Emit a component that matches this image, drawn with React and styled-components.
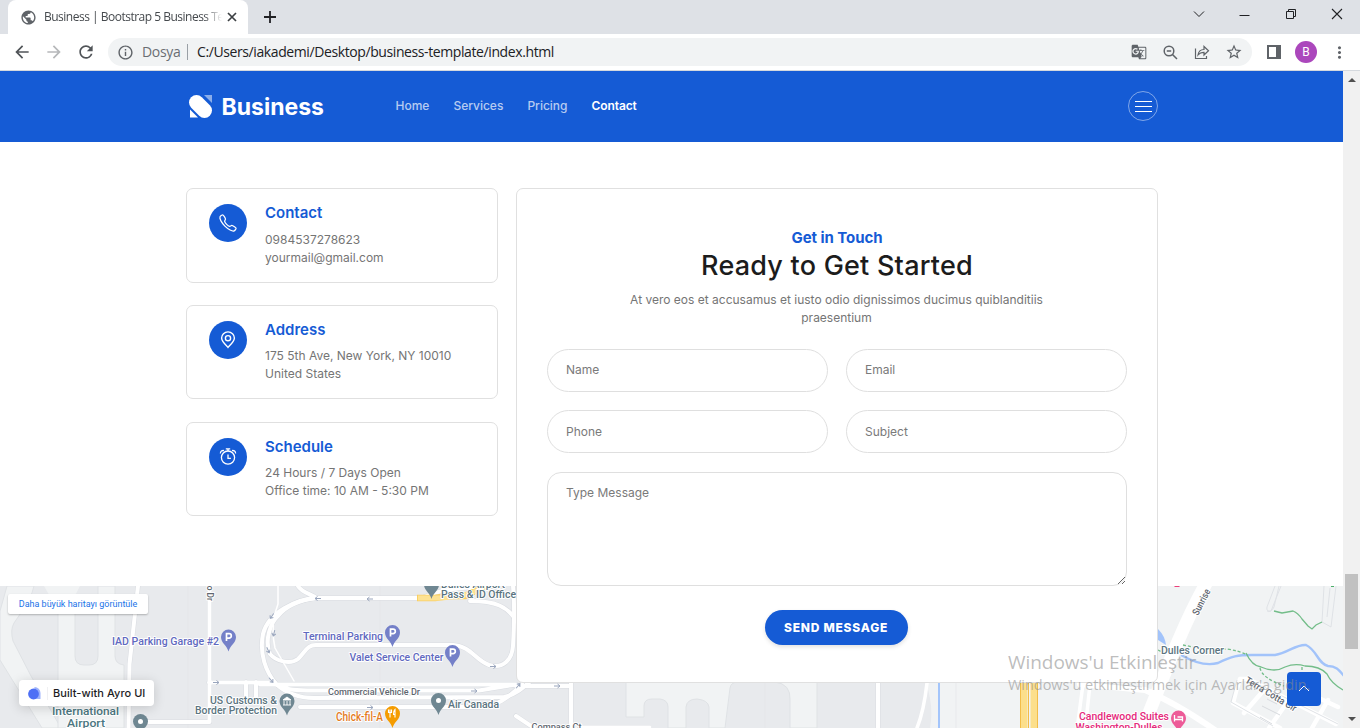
import React from 'react';
import styled, { createGlobalStyle, css } from 'styled-components';
import {
  MdArrowBack, MdArrowForward, MdRefresh, MdInfoOutline, MdGTranslate,
  MdStarBorder, MdMoreVert, MdPublic,
} from 'react-icons/md';
import { IoCallOutline } from 'react-icons/io5';

const BLUE = '#155bd5';
const inter = "Inter, 'Liberation Sans', sans-serif";
const segoe = "'Open Sans', 'Noto Sans', sans-serif";

const Global = createGlobalStyle`
  * { box-sizing: border-box; }
  body { margin: 0; background: #fff; overflow: hidden; font-family: ${inter}; }
`;

const Window = styled.div`
  position: relative;
  width: 1360px;
  height: 728px;
  display: flex;
  flex-direction: column;
  overflow: hidden;
`;

/* ---------- browser chrome ---------- */
const TabBar = styled.div`
  height: 34px;
  flex: none;
  background: #dee1e6;
  display: flex;
  align-items: flex-start;
`;
const Tab = styled.div`
  width: 240px;
  height: 34px;
  margin-left: 8px;
  padding: 0 10px 0 12px;
  background: #fff;
  border-radius: 8px 8px 0 0;
  display: flex;
  align-items: center;
  color: #5f6368;
`;
const TabTitle = styled.span`
  flex: 1;
  margin-left: 7px;
  font: 12px/16px ${segoe};
  letter-spacing: -0.5px;
  color: #45494d;
  white-space: nowrap;
  overflow: hidden;
  mask-image: linear-gradient(90deg, #000 160px, transparent 178px);
`;
const Glyph = styled.svg`
  display: block;
  flex: none;
  fill: none;
  stroke: ${(p) => p.$color || '#202124'};
  stroke-width: ${(p) => p.$weight || 1};
`;
const NewTab = styled.div`
  padding: 11px 0 0 16px;
`;
const WindowButtons = styled.div`
  margin-left: auto;
  height: 28px;
  display: flex;
  align-items: center;
  gap: 31px;
  padding-right: 15px;
`;
const Toolbar = styled.div`
  height: 37px;
  flex: none;
  display: flex;
  align-items: center;
  padding: 0 11px 0 12px;
  background: #fff;
  border-bottom: 1px solid #d5d9de;
  color: #5f6368;
`;
const NavIcons = styled.div`
  display: flex;
  gap: 12px;
  svg { width: 20px; height: 20px; color: #505458; }
  svg:nth-child(2) { color: #b6b8ba; }
`;
const Omnibox = styled.div`
  flex: 1;
  height: 28px;
  margin-left: 12px;
  padding: 0 9px 0 9px;
  border-radius: 14px;
  background: #f1f3f4;
  display: flex;
  align-items: center;
  font: 14px/20px ${segoe};
  color: #202124;
`;
const Scheme = styled.span`
  width: 45px;
  margin-left: 8px;
  letter-spacing: -0.3px;
  color: #6a6e73;
`;
const Divider = styled.i`
  width: 1px;
  height: 16px;
  margin: 0 9px 0 0;
  background: #9aa0a6;
`;
const Url = styled.span`
  flex: 1;
  white-space: nowrap;
  letter-spacing: -0.4px;
`;
const OmniIcons = styled.div`
  display: flex;
  align-items: center;
  gap: 15px;
  color: #5f6368;
`;
const SideIcons = styled.div`
  display: flex;
  align-items: center;
  padding-left: 15px;
`;
const Avatar = styled.span`
  width: 22px;
  height: 22px;
  margin: 0 13px 0 14px;
  border-radius: 50%;
  background: #ab47bc;
  color: #fff;
  font: 12px/22px Roboto, sans-serif;
  text-align: center;
`;

/* ---------- page ---------- */
const Viewport = styled.div`
  flex: 1;
  min-height: 0;
  display: flex;
`;
const Page = styled.main`
  position: relative;
  width: 1343px;
  display: flex;
  flex-direction: column;
  overflow: hidden;
`;
const Scrollbar = styled.div`
  width: 17px;
  background: #f1f1f1;
  display: flex;
  flex-direction: column;
  align-items: center;
  padding: 7px 0;
`;
const Arrow = styled.i`
  border: 4px solid transparent;
  border-top-width: ${(p) => (p.$down ? '4px' : 0)};
  border-bottom-width: ${(p) => (p.$down ? 0 : '4px')};
  border-${(p) => (p.$down ? 'top' : 'bottom')}-color: #505050;
`;
const Thumb = styled.div`
  width: 13px;
  height: 75px;
  margin: 492px 0 auto;
  background: #c1c1c1;
`;

const Header = styled.header`
  height: 71px;
  flex: none;
  padding: 0 185px 0 188px;
  background: ${BLUE};
  display: flex;
  align-items: center;
`;
const Brand = styled.div`
  width: 207.5px;
  display: flex;
  align-items: center;
  gap: 8.5px;
  color: #fff;
  font-size: 23px;
  font-weight: 700;
  line-height: 28px;
`;
const Nav = styled.nav`
  display: flex;
  gap: 24px;
  margin-top: -1px;
`;
const NavLink = styled.span`
  font-size: 12px;
  font-weight: 500;
  line-height: 18px;
  color: ${(p) => (p.$active ? '#fff' : 'rgba(255,255,255,.7)')};
  ${(p) => p.$active && css`font-weight: 600; letter-spacing: -0.1px;`}
`;
const MenuToggle = styled.div`
  width: 30px;
  height: 30px;
  margin: 0 0 1px auto;
  border: 1px solid rgba(255, 255, 255, 0.45);
  border-radius: 50%;
  display: flex;
  flex-direction: column;
  align-items: center;
  justify-content: center;
  gap: 4px;
`;
const MenuBar = styled.i`
  width: 17px;
  height: 1px;
  background: #fff;
`;

const ContactSection = styled.section`
  height: 444px;
  flex: none;
  padding: 46px 0 0 186px;
  display: flex;
  align-items: flex-start;
  gap: 18px;
`;
const InfoColumn = styled.div`
  width: 312px;
  display: flex;
  flex-direction: column;
  gap: 23px;
`;
const InfoTitle = styled.h3`
  margin: 0 0 8px;
  font-size: 15px;
  font-weight: 600;
  line-height: 18px;
  color: ${BLUE};
`;
const InfoCard = styled.article`
  height: 94px;
  padding: 15px 22px;
  border: 1px solid #e0e0e0;
  border-radius: 7px;
  display: flex;
  gap: 18px;
  &:first-child { height: 95px; margin-bottom: -1px; }
  &:first-child ${InfoTitle} { margin-bottom: 9px; }
`;
const InfoIcon = styled.div`
  width: 38px;
  height: 38px;
  border-radius: 50%;
  background: ${BLUE};
  color: #fff;
  display: flex;
  align-items: center;
  justify-content: center;
`;
const InfoLine = styled.p`
  margin: 0;
  font-size: 12px;
  line-height: 18px;
  color: #757575;
  white-space: nowrap;
`;

const FormCard = styled.form`
  position: relative;
  z-index: 1;
  width: 642px;
  height: 495px;
  padding: 38px 30px 0;
  background: #fff;
  border: 1px solid #e0e0e0;
  border-radius: 7px;
  display: flex;
  flex-direction: column;
  align-items: center;
  text-align: center;
`;
const Eyebrow = styled.h5`
  margin: 0;
  font-size: 15px;
  font-weight: 700;
  line-height: 22px;
  letter-spacing: -0.05px;
  color: ${BLUE};
`;
const Heading = styled.h2`
  margin: 0;
  font-size: 27px;
  font-weight: 500;
  line-height: 34px;
  letter-spacing: 0.22px;
  color: #1c1c1c;
`;
const Lead = styled.p`
  width: 440px;
  margin: 8px 0 22px;
  padding-right: 1px;
  font-size: 12px;
  line-height: 18px;
  color: #757575;
`;
const Fields = styled.div`
  width: 580px;
  display: grid;
  grid-template-columns: 1fr 1fr;
  column-gap: 18px;
  row-gap: 18px;
`;
const fieldStyle = css`
  display: block;
  border: 1px solid #dfdfdf;
  background: #fff;
  font: 12px/18px ${inter};
  outline: none;
  &::placeholder { color: #7a7a7a; opacity: 1; }
`;
const Input = styled.input`
  ${fieldStyle}
  width: 100%;
  height: 43px;
  padding: 0 18px ${(p) => (p.$raised ? '3px' : '1px')};
  border-radius: 22px;
`;
const Message = styled.textarea`
  ${fieldStyle}
  grid-column: 1 / -1;
  width: 100%;
  height: 114px;
  margin-top: 1px;
  padding: 11px 18px;
  border-radius: 14px;
  resize: vertical;
`;
const Submit = styled.button`
  width: 143px;
  height: 35px;
  flex: none;
  margin: 24px 2px 0 0;
  padding: 0;
  border: 0;
  border-radius: 18px;
  background: ${BLUE};
  box-shadow: 0 2px 4px rgba(0, 0, 0, 0.12);
  color: #fff;
  font: 800 12px/18px ${inter};
  letter-spacing: 0.75px;
`;

const MapArea = styled.section`
  position: relative;
  height: 142px;
  flex: none;
`;
const MapSvg = styled.svg`
  display: block;
  text { font-family: Roboto, sans-serif; paint-order: stroke; stroke: #fff; stroke-width: 2px; stroke-linejoin: round; }
`;
const MapLink = styled.div`
  position: absolute;
  left: 8px;
  top: 8px;
  width: 140px;
  height: 20px;
  background: #fff;
  border-radius: 2px;
  box-shadow: 0 1px 2px rgba(0, 0, 0, 0.25);
  color: #1a73e8;
  font: 9px/20px Roboto, sans-serif;
  text-align: center;
`;
const AyroBadge = styled.div`
  position: absolute;
  left: 19px;
  top: 94px;
  width: 135px;
  height: 26px;
  padding-left: 9px;
  background: #fff;
  border-radius: 4px;
  box-shadow: 0 2px 12px rgba(0, 0, 0, 0.16);
  display: flex;
  align-items: center;
  color: #1d1d1f;
  font-size: 11px;
  font-weight: 500;
  letter-spacing: 0.05px;
  white-space: nowrap;
`;
const AyroRule = styled.i`
  width: 1px;
  height: 13px;
  margin: 0 5px 0 6px;
  background: #f0f0f2;
`;
const ScrollTop = styled.div`
  position: absolute;
  left: 1287px;
  top: 86px;
  width: 34px;
  height: 34px;
  border-radius: 4px;
  background: ${BLUE};
  display: flex;
  align-items: center;
  justify-content: center;
`;
const Watermark = styled.div`
  position: absolute;
  z-index: 3;
  left: 1008px;
  top: 650px;
  color: rgba(140, 140, 140, 0.58);
  font-family: ${segoe};
  white-space: nowrap;
`;
const WatermarkTitle = styled.div`
  font-size: 19px;
  line-height: 24px;
  letter-spacing: -0.05px;
`;
const WatermarkText = styled.div`
  font-size: 14.5px;
  line-height: 22px;
  letter-spacing: -0.04px;
`;

const AlarmIcon = () => (
  <Glyph width="18" height="18" viewBox="0 0 18 18" $color="#fff" $weight="1.3">
    <circle cx="9" cy="9.6" r="6.6" />
    <path d="M6.800 .9h4.400M9 .9v2M1.400 5.400c0-2 1.500-3.200 3.600-2.800M16.600 5.400c0-2-1.500-3.200-3.600-2.800M9 6.600v3.700h2.900" />
  </Glyph>
);
const PinIcon = () => (
  <Glyph width="18" height="18" viewBox="0 0 18 18" $color="#fff" $weight="1.4">
    <path d="M9 16.400C7.200 14.500 2.600 10.600 2.600 7.100a6.400 6.200 0 0 1 12.800 0c0 3.500-4.600 7.400-6.400 9.300z" />
    <circle cx="9" cy="7.200" r="2.600" />
  </Glyph>
);

const INFO = [
  { title: 'Contact', lines: ['0984537278623', 'yourmail@gmail.com'], icon: <IoCallOutline size={20} strokeWidth="36" /> },
  { title: 'Address', lines: ['175 5th Ave, New York, NY 10010', 'United States'], icon: <PinIcon /> },
  { title: 'Schedule', lines: ['24 Hours / 7 Days Open', 'Office time: 10 AM - 5:30 PM'], icon: <AlarmIcon /> },
];

const Pin = ({ x, y, color, children }) => (
  <g transform={`translate(${x} ${y})`}>
    <path d="M0 14.500C-1.500 8.500-7.500 6-7.500 0a7.500 7.500 0 0 1 15 0C7.500 6 1.500 8.500 0 14.500z" fill={color} />
    {children}
  </g>
);
const Parking = () => (
  <path d="M-2 4V-3.300H.600a2.200 2.200 0 0 1 0 4.400H-2" fill="none" stroke="#fff" strokeWidth="1.700" />
);
const Label = ({ x, y, w, size = 11, color = '#5b7480', weight = 500, children, ...rest }) => (
  <text x={x} y={y} fontSize={size} fill={color} fontWeight={weight} textLength={w} lengthAdjust="spacingAndGlyphs" {...rest}>
    {children}
  </text>
);
const RoadArrow = ({ x, y, r = 0 }) => (
  <path d="M-3 0H3M.500-2L3 0 .500 2" transform={`translate(${x} ${y}) rotate(${r})`} fill="none" stroke="#9aa6bd" strokeWidth="1" />
);

const ROADS = [
  'M138 586L129.500 664L128.500 728',
  'M209.500 586V722H148M209 682.500H275M246 682v16M256 682v16',
  'M298 586c4 7 14 8 18 12C296 599 268 613 263 634c-4 20 3 38 13 50 10 9 22 14 38 14l190-1c12-2 20-10 30-19',
  'M316 598H420M422 598c25-12 50-10 70-12M513 586c2 20 1 42 0 60-1 14-10 23-24 19-14-5-18-19-36-20H316c-9 0-10 6-18 14-8 6-22 2-28-5-6-14 1-32 8-38 8-10 22-16 38-18',
  'M260 684.500H516M276 684.500c14 6 20 6 38 6h165l37-6M300 707h15H480c16 0 30-10 42-23M470 601c25 0 38 5 47 21',
  'M516 686H571M516 716l18 12M571 683V728',
  'M878 683V728',
];

const AreaMap = () => (
  <MapSvg width="1343" height="142" viewBox="0 586 1343 142">
    <rect y="586" width="1343" height="142" fill="#e8eaed" />

    {/* taxiways and open ground */}
    <g fill="#f1f3f4" stroke="#dfe2e5" strokeWidth="1">
      <path d="M7 586H34Q32 598 14 623Q10 630 13 641L31 676L61 728H42L0 660V611z" />
      <path d="M58 586H75V656Q75 665 84 665H89Q98 665 98 656V586H115V656Q115 664 124 665V728H58z" />
      <path d="M44 586H80L60 625V614z" stroke="none" />
      <path d="M626 682V717H644V706Q644 699 652 699H660Q668 700 668 707V728H686V707Q687 699 697 699Q708 700 709 707V728H725L730 688Q731 682 738 682H775Q791 684 790 700V728H817V682z" />
    </g>
    <path d="M926 683Q934 706 930 728H1343V586H1150V683z" fill="#f1f3f4" />
    <path d="M188 586V728M380 586V728M765 683V728M956 683V728" stroke="#e2e4e8" strokeWidth=".6" />

    {/* roads */}
    <g fill="none" strokeLinecap="round" strokeLinejoin="round">
      <g stroke="#d9dce1" strokeWidth="5">{ROADS.map((d) => <path key={d} d={d} />)}</g>
      <g stroke="#fff" strokeWidth="4">{ROADS.map((d) => <path key={d} d={d} />)}</g>
      <path d="M278 586v18q-8 22-3 44l19 33" stroke="#fff" strokeWidth="1.500" />
      <path d="M927 683c-2 18-4 30-10 45" stroke="#fff" strokeWidth="3.500" />
      <path d="M417 598H435L448 596H465L484 586" stroke="#f9cf63" strokeWidth="6.500" strokeLinecap="butt" />
      <path d="M418 598H442L465 595L484 588" stroke="#fde293" strokeWidth="5" strokeLinecap="butt" />
      <path d="M580 727H650" stroke="#fff" strokeWidth="2.500" />
    </g>
    <path d="M939 683V728" stroke="#a3c5fb" strokeWidth="2" />
    <path d="M1024 683V728M1034 683V728" stroke="#fcdf8b" strokeWidth="7" />
    <path d="M1020.500 683V728M1028.500 683V728M1037.500 683V728" stroke="#f3bd49" strokeWidth="1" />

    <g fill="none" stroke="#fff" strokeLinecap="round" strokeLinejoin="round">
      <path d="M1208 580C1185 620 1166 670 1143 728" strokeWidth="13" />
      <path d="M1080 684L1145 690Q1180 705 1222 735" strokeWidth="6" />
      <path d="M1083 684L1078 722M1090 684L1086 722" strokeWidth="3.500" />
      <path d="M1240 679Q1236 690 1233 703L1280 728M1240 679H1248L1336 724M1264 690L1244 713M1291 697L1269 728M1310 694L1338 707M1328 700L1312 728" strokeWidth="4.500" />
    </g>
    <g fill="none" stroke="#dfe2e6" strokeWidth="1" strokeLinejoin="round">
      <path d="M1275 586L1267 607Q1266 612 1271 611L1281 586M1279 586L1274 607Q1271 613 1267 611M1324 586L1322 622L1331 627L1336 586M1330 588L1327 617" />
      <path d="M1267 699L1277 704M1262 706L1280 715M1260 717L1272 724" stroke="#d7dade" />
      <path d="M1237 680L1231 702L1273 726M1250 680L1338 724M1080 681L1142 687" />
    </g>
    <path d="M1158 629q7 7 8 16l-8-5z" fill="#a2c3fa" />
    <path d="M1181 655C1195 663 1207 666 1218 663C1232 656 1238 655 1252 655H1275C1288 653 1296 644 1306 645C1317 650 1318 664 1328 666C1336 666 1339 670 1344 676" fill="none" stroke="#a2c3fa" strokeWidth="2.400" />
    <g fill="none" stroke="#73bd89" strokeWidth="1.300">
      <path d="M1274 611l8 2 11-2q5 2 9 8l6 7 4 3 4-4 6-3M1246 653q6 13 15 14 14 6 24 0 10-4 20-1 15 0 22 8 4 9 16 16" />
      <path d="M1183 645l10 2q16 3 34 2 13 2 20 6M1260 668q2 10 24 18M1302 667v6M1158 650l6 3" strokeDasharray="3 2" />
    </g>
    <path d="M1174 586h6l-1 1h-4z" fill="#ec407a" />
    <path d="M1331 586h3v1h-3z" fill="#4caf6a" />

    {/* driving directions */}
    <RoadArrow x={318} y={598.500} r={180} />
    <RoadArrow x={370} y={599} r={180} />
    <RoadArrow x={272} y={616} r={125} />
    <RoadArrow x={274} y={633} r={105} />
    <RoadArrow x={268} y={650} r={65} />
    <RoadArrow x={271} y={680} r={50} />
    <RoadArrow x={216} y={682.500} />
    <RoadArrow x={370} y={707.500} />
    <RoadArrow x={474} y={691} />
    <RoadArrow x={493} y={666.500} />
    <RoadArrow x={518} y={686} r={-50} />
    <RoadArrow x={557} y={686} />

    {/* places */}
    <Label x={112} y={644.500} w={107} size={11.500} color="#5f69c0">IAD Parking Garage #2</Label>
    <Pin x={228.500} y={637} color="#7480c8"><Parking /></Pin>
    <Label x={303} y={640} w={80} size={11.500} color="#5f69c0">Terminal Parking</Label>
    <Pin x={392.500} y={632.500} color="#7480c8"><Parking /></Pin>
    <Label x={349.500} y={660.500} w={94} size={11.500} color="#5f69c0">Valet Service Center</Label>
    <Pin x={452.500} y={652.500} color="#7480c8"><Parking /></Pin>
    <Pin x={431.500} y={584.500} color="#6f8792" />
    <Label x={441} y={587.500} w={64}>Dulles Airport</Label>
    <Label x={441} y={598} w={75}>Pass &amp; ID Office</Label>
    <Label x={328} y={694.500} w={92} size={9.500} color="#5f6770">Commercial Vehicle Dr</Label>
    <Label x={210} y={703.500} w={67}>US Customs &amp;</Label>
    <Label x={195} y={714} w={82}>Border Protection</Label>
    <Pin x={287} y={701} color="#6f8792">
      <path d="M-4-1L0-4 4-1zM-4 4H4M-3 0v4M0 0v4M3 0v4" fill="#fff" stroke="#fff" strokeWidth=".9" />
    </Pin>
    <Pin x={438.500} y={700.500} color="#6f8792"><circle r="2.500" fill="#fff" /></Pin>
    <Label x={448} y={708} w={51}>Air Canada</Label>
    <Label x={336} y={720.500} w={47} size={12} color="#e37a1c">Chick-fil-A</Label>
    <Pin x={392.500} y={713.500} color="#f59c00">
      <path d="M-2.500-4v8M-4-4v3h3v-3M2.500 4V-4Q.500-2 1 1h1.500" fill="none" stroke="#fff" strokeWidth="1.100" />
    </Pin>
    <Label x={52} y={715} w={67} size={11.500} color="#4b7680">International</Label>
    <Label x={67} y={727} w={38} size={11.500} color="#4b7680">Airport</Label>
    <circle cx="140.500" cy="721.500" r="7.500" fill="#6f8792" />
    <circle cx="140.500" cy="721.500" r="2.500" fill="#fff" />
    <Label size={9} color="#5f6770" w={20} transform="translate(207 581) rotate(90)">do Dr</Label>
    <Label x={531.500} y={730} w={50} size={9.500} color="#5f6770">Compass Ct</Label>
    <Label x={1161} y={654} w={63}>Dulles Corner</Label>
    <Label size={10} color="#5f6770" w={28} transform="translate(1198 616) rotate(-63)">Sunrise</Label>
    <Label size={9.500} color="#5f6770" w={58} transform="translate(1244.500 682) rotate(31)">Terra Cotta Cir</Label>
    <Label x={1079} y={720} w={90} color="#e5297b">Candlewood Suites</Label>
    <Label x={1075.500} y={731} w={87} color="#e5297b">Washington-Dulles</Label>
    <Pin x={1178.500} y={718} color="#ed5b98">
      <path d="M-4-3V3.500M-4 1.500H4V3.500M4 1.500V-1H-1" fill="none" stroke="#fff" strokeWidth="1.300" />
    </Pin>
  </MapSvg>
);

export default function App() {
  return (
    <Window>
      <Global />
      <TabBar>
        <Tab>
          <MdPublic size={17} />
          <TabTitle>Business | Bootstrap 5 Business Template</TabTitle>
          <Glyph width="12" height="12" $weight="1.700" $color="#3c4043"><path d="M2 2l8 8M10 2l-8 8" /></Glyph>
        </Tab>
        <NewTab>
          <Glyph width="12" height="12" $weight="1.800"><path d="M6 0v12M0 6h12" /></Glyph>
        </NewTab>
        <WindowButtons>
          <Glyph width="14" height="10"><path d="M2 2.500l5 5 5-5" /></Glyph>
          <Glyph width="15" height="11"><path d="M2.500 6.500h10" /></Glyph>
          <Glyph width="15" height="12"><path d="M3.500 3.500h7v7h-7zM5.500 3.500v-2h7v7h-2" /></Glyph>
          <Glyph width="16" height="12" $weight="1.100"><path d="M3 1l10 10M13 1L3 11" /></Glyph>
        </WindowButtons>
      </TabBar>
      <Toolbar>
        <NavIcons><MdArrowBack /><MdArrowForward /><MdRefresh /></NavIcons>
        <Omnibox>
          <MdInfoOutline size={17} color="#5f6368" />
          <Scheme>Dosya</Scheme>
          <Divider />
          <Url>C:/Users/iakademi/Desktop/business-template/index.html</Url>
          <OmniIcons>
            <MdGTranslate size={16} />
            <Glyph width="17" height="17" $color="#5f6368" $weight="1.500">
              <circle cx="7" cy="7" r="4.800" />
              <path d="M10.500 10.500l4.500 4.500M4.800 7h4.400" />
            </Glyph>
            <Glyph width="16" height="16" $color="#5f6368" $weight="1.200">
              <path d="M1.500 4.500v10h11V12M4 11c.500-3.500 2.500-5.500 6-5.500V2.500l4.500 4.300L10 11V8.300c-2.500 0-4.500.800-6 2.700z" />
            </Glyph>
            <MdStarBorder size={18} />
          </OmniIcons>
        </Omnibox>
        <SideIcons>
          <Glyph width="14" height="14" $color="#5f6368" $weight="2"><path d="M1 1h12v12H1z" /><path d="M11 1v12" strokeWidth="4" /></Glyph>
          <Avatar>B</Avatar>
          <MdMoreVert size={19} />
        </SideIcons>
      </Toolbar>

      <Viewport>
        <Page>
          <Header>
            <Brand>
              <svg width="25" height="25" viewBox="0 0 25 25">
                <path d="M16 1h8v8z" fill="#fff" opacity=".5" />
                <path d="M2 15.500L10 23.500H2z" fill="#fff" />
                <path d="M8.500 8.500L16.500 16.500" stroke={BLUE} strokeWidth="17" strokeLinecap="round" />
                <path d="M8.500 8.500L16.500 16.500" stroke="#fff" strokeWidth="15" strokeLinecap="round" />
              </svg>
              Business
            </Brand>
            <Nav>
              <NavLink>Home</NavLink>
              <NavLink>Services</NavLink>
              <NavLink>Pricing</NavLink>
              <NavLink $active>Contact</NavLink>
            </Nav>
            <MenuToggle><MenuBar /><MenuBar /><MenuBar /></MenuToggle>
          </Header>

          <ContactSection>
            <InfoColumn>
              {INFO.map((item) => (
                <InfoCard key={item.title}>
                  <InfoIcon>{item.icon}</InfoIcon>
                  <div>
                    <InfoTitle>{item.title}</InfoTitle>
                    {item.lines.map((line) => <InfoLine key={line}>{line}</InfoLine>)}
                  </div>
                </InfoCard>
              ))}
            </InfoColumn>
            <FormCard>
              <Eyebrow>Get in Touch</Eyebrow>
              <Heading>Ready to Get Started</Heading>
              <Lead>At vero eos et accusamus et iusto odio dignissimos ducimus quiblanditiis praesentium</Lead>
              <Fields>
                <Input $raised placeholder="Name" />
                <Input $raised placeholder="Email" />
                <Input placeholder="Phone" />
                <Input placeholder="Subject" />
                <Message placeholder="Type Message" />
              </Fields>
              <Submit type="button">SEND MESSAGE</Submit>
            </FormCard>
          </ContactSection>

          <MapArea>
            <AreaMap />
            <MapLink>Daha büyük haritayı görüntüle</MapLink>
            <AyroBadge>
              <svg width="13" height="13" viewBox="0 0 13 13">
                <path d="M6.500 0A6 6 0 0 1 12.500 6V12H6z" fill="#9db2fb" />
                <circle cx="5.500" cy="7" r="5.400" fill="#4d6ff5" />
              </svg>
              <AyroRule />
              Built-with Ayro UI
            </AyroBadge>
            <ScrollTop>
              <Glyph width="12" height="8" $color="#fff"><path d="M1 6l5-5 5 5" /></Glyph>
            </ScrollTop>
          </MapArea>
        </Page>
        <Scrollbar><Arrow /><Thumb /><Arrow $down /></Scrollbar>
      </Viewport>

      <Watermark>
        <WatermarkTitle>Windows'u Etkinleştir</WatermarkTitle>
        <WatermarkText>Windows'u etkinleştirmek için Ayarlar'a gidin.</WatermarkText>
      </Watermark>
    </Window>
  );
}
